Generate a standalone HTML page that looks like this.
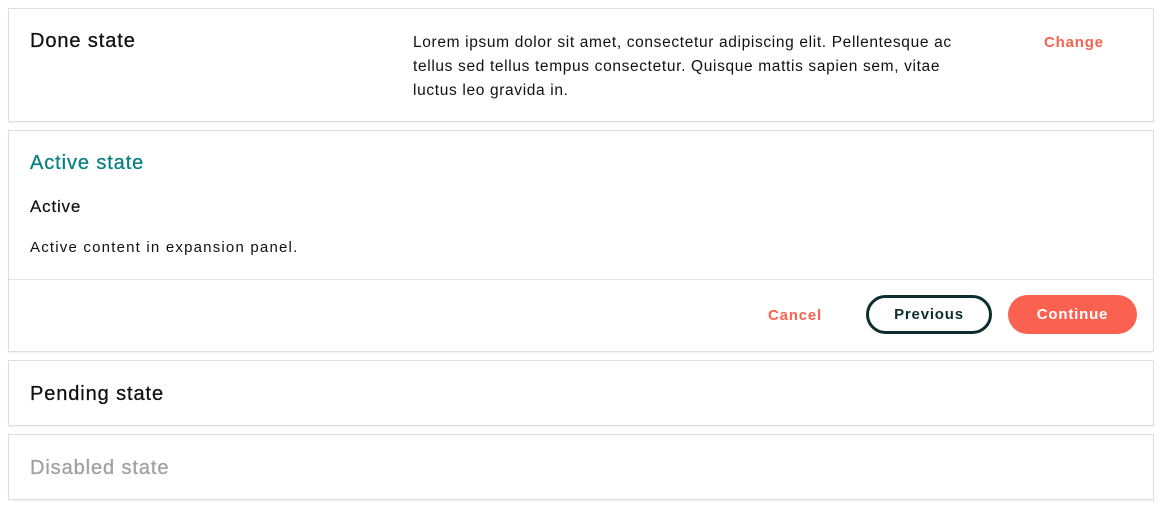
<!DOCTYPE html>
<html><head><style>
body{margin:0;background:#fff;font-family:"Liberation Sans",sans-serif;width:1162px;height:516px;position:relative;overflow:hidden}
.p{position:absolute;left:8px;width:1144px;border:1px solid #dedede;box-shadow:0 1px 1px rgba(0,0,0,.06);background:#fff}
.t{position:absolute;left:21px;font-size:20px;letter-spacing:0.9px;color:#111;-webkit-text-stroke:0.3px}
.a{position:absolute;font-size:15px;color:#111}
.b{position:absolute;font-size:15px;font-weight:bold;letter-spacing:0.8px;border-radius:20px;box-sizing:border-box;text-align:center}
</style></head><body>
<div class="p" style="top:8px;height:112px">
<div class="t" style="top:21px">Done state</div>
<div class="a" style="left:404px;top:22px;width:575px;line-height:24px;font-size:15.5px;letter-spacing:0.65px">Lorem ipsum dolor sit amet, consectetur adipiscing elit. Pellentesque ac tellus sed tellus tempus consectetur. Quisque mattis sapien sem, vitae luctus leo gravida in.</div>
<div class="a" style="left:1035px;top:25px;color:#fa6150;font-weight:bold;letter-spacing:0.8px">Change</div>
</div>
<div class="p" style="top:130px;height:220px">
<div class="t" style="top:21px;color:#0b8082">Active state</div>
<div class="a" style="left:21px;top:66px;font-size:17px;letter-spacing:0.8px;-webkit-text-stroke:0.2px">Active</div>
<div class="a" style="left:21px;top:108px;letter-spacing:1.2px">Active content in expansion panel.</div>
<div style="position:absolute;left:0;right:0;top:148px;border-top:1px solid #e3e3e3"></div>
<div class="a" style="left:759px;top:176px;color:#fa6150;font-weight:bold;letter-spacing:0.8px">Cancel</div>
<div class="b" style="left:857px;top:164px;width:126px;height:39px;border:3px solid #0d2e2e;color:#0d2e2e;line-height:33px">Previous</div>
<div class="b" style="left:999px;top:164px;width:129px;height:39px;background:#fa6150;color:#fff;line-height:39px">Continue</div>
</div>
<div class="p" style="top:360px;height:64px">
<div class="t" style="top:22px">Pending state</div>
</div>
<div class="p" style="top:434px;height:64px">
<div class="t" style="top:22px;color:#a0a0a0">Disabled state</div>
</div>
</body></html>
